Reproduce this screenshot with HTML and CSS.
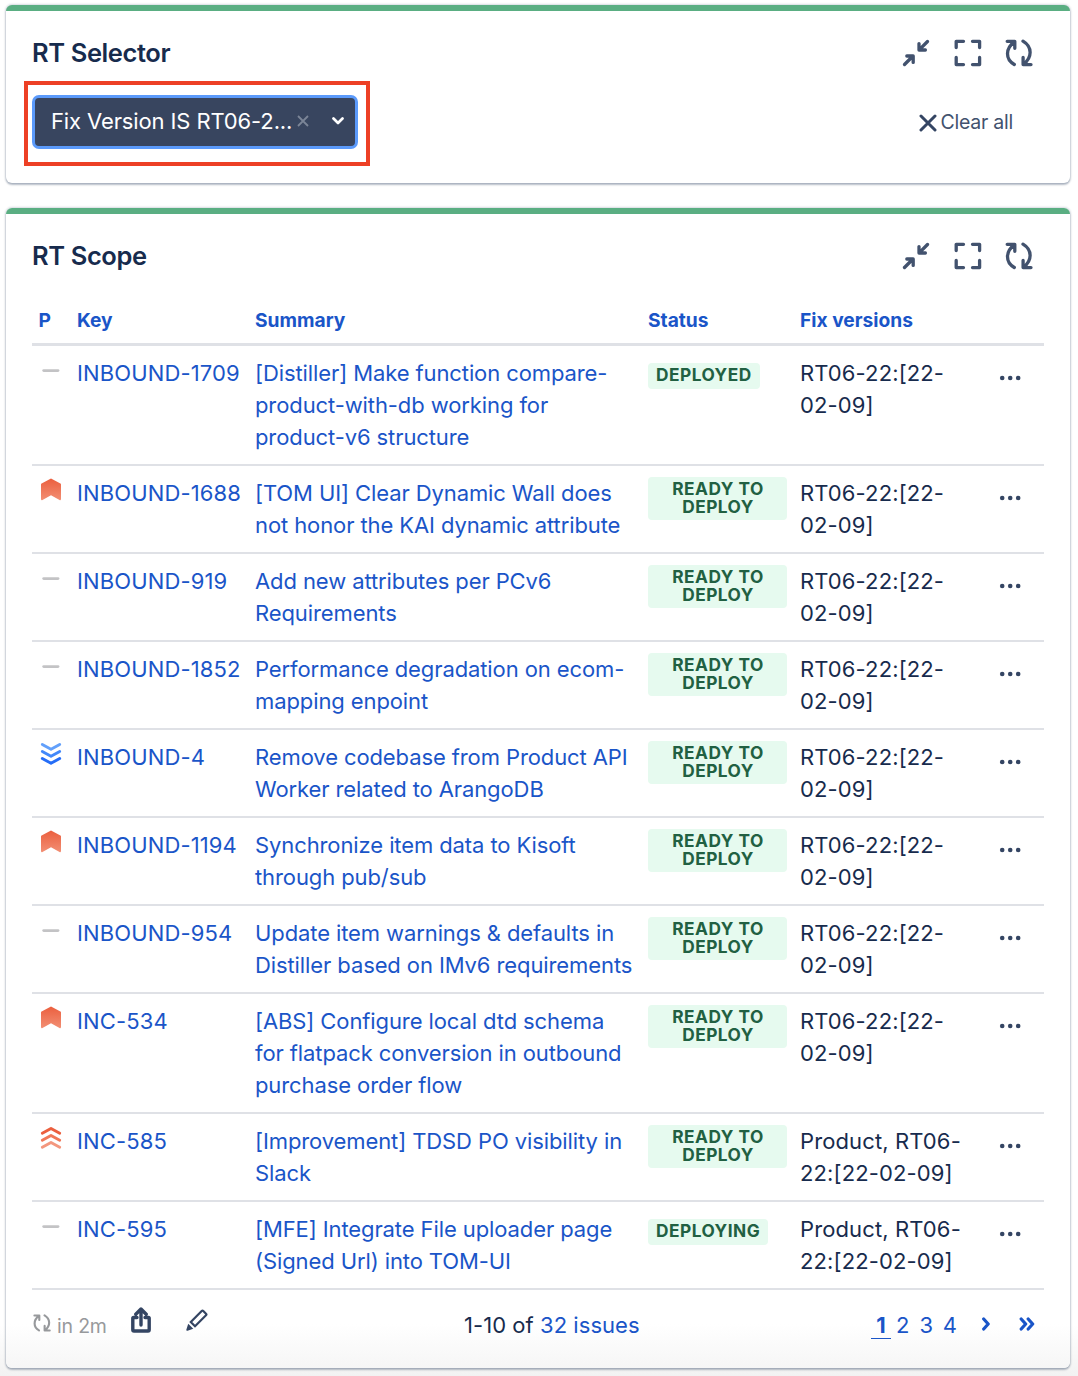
FILE: index.html
```
<!DOCTYPE html>
<html lang="en">
<head>
<meta charset="utf-8">
<title>RT dashboard</title>
<link rel="stylesheet" href="styles.css">
</head>
<body>
<svg class="defs" width="0" height="0" aria-hidden="true">
  <defs>
    <linearGradient id="flame" x1="0" y1="0" x2="0" y2="1"><stop offset="0" stop-color="#eb5f3e"/><stop offset="1" stop-color="#f28f74"/></linearGradient>
    <symbol id="collapse" viewBox="0 0 28 28"><path d="M2.500 25.500L11 17M4.800 17H11.200V23.400M25.500 2.500L17.200 10.800M17 4.600V11H23.400" /></symbol>
    <symbol id="expand" viewBox="0 0 28 28"><path d="M2.200 8.500V2.300H9.500M18.500 2.300H25.600V8.500M2.200 18.500V25.600H9.500M18.500 25.600H25.600V18.500"/></symbol>
    <symbol id="refresh" viewBox="0 0 28 28"><path d="M2.200 2.300H9.800V9.300M9.500 2.600C.2 9.500 .2 20.300 9.300 25.500M18 2.200C27.300 7.800 27.500 18.500 18.500 25.200M18.100 18.500V25.600H26"/></symbol>
    <symbol id="none" viewBox="0 0 22 24"><path d="M3.700 12.600H18" fill="none" stroke="#c3c3c5" stroke-width="2.800" stroke-linecap="round"/></symbol>
    <symbol id="flag" viewBox="0 0 22 24"><path d="M1.600 5.500Q1 5.800 1 6.400V21Q1 22.700 2.500 21.900L11 17.300 19.500 21.900Q21 22.700 21 21V6.400Q21 5.800 20.400 5.500L11 .5Z" fill="url(#flame)"/></symbol>
    <symbol id="highest" viewBox="0 0 22 24"><g fill="none" stroke-width="2.900" stroke-linecap="round" stroke-linejoin="round"><path d="M2.300 7.300L11 2.400 19.700 7.300" stroke="#eb5f3e"/><path d="M2.300 14.300L11 9.400 19.700 14.300" stroke="#f07858"/><path d="M2.300 21.300L11 16.400 19.700 21.300" stroke="#f3977e"/></g></symbol>
    <symbol id="lowest" viewBox="0 0 22 24"><g fill="none" stroke-width="2.900" stroke-linecap="round" stroke-linejoin="round"><path d="M2.300 2.400L11 7.300 19.700 2.400" stroke="#62a0fb"/><path d="M2.300 9.400L11 14.300 19.700 9.400" stroke="#4288fa"/><path d="M2.300 16.400L11 21.300 19.700 16.400" stroke="#256df7"/></g></symbol>
    <symbol id="more" viewBox="0 0 22 6"><circle cx="3.200" cy="3" r="2.300"/><circle cx="11.200" cy="3" r="2.300"/><circle cx="19.200" cy="3" r="2.300"/></symbol>
  </defs>
</svg>

<section class="card selector">
  <header class="card-head">
    <h2>RT Selector</h2>
    <div class="tools"><svg class="tool"><use href="#collapse"/></svg><svg class="tool"><use href="#expand"/></svg><svg class="tool"><use href="#refresh"/></svg></div>
  </header>
  <div class="filters">
    <button class="filter">
      <span>Fix Version IS RT06-2...</span>
      <svg class="remove" viewBox="0 0 12 12"><path d="M1 1L11 11M11 1L1 11"/></svg>
      <svg class="caret" viewBox="0 0 12 8"><path d="M1.500 1.500L6 6 10.500 1.500"/></svg>
    </button>
    <div class="clear"><svg viewBox="0 0 18 18"><path d="M2 2L16 16M16 2L2 16"/></svg><span>Clear all</span></div>
    <div class="highlight"></div>
  </div>
</section>

<section class="card scope">
  <header class="card-head">
    <h2>RT Scope</h2>
    <div class="tools"><svg class="tool"><use href="#collapse"/></svg><svg class="tool"><use href="#expand"/></svg><svg class="tool"><use href="#refresh"/></svg></div>
  </header>
  <div class="issues">
    <div class="row head"><span class="p">P</span><span>Key</span><span>Summary</span><span>Status</span><span>Fix versions</span></div>
    <div class="row"><svg class="prio"><use href="#none"/></svg><a class="key">INBOUND-1709</a><a class="summary">[Distiller] Make function compare-<br>product-with-db working for<br>product-v6 structure</a><div><b class="badge single">DEPLOYED</b></div><span class="fix">RT06-22:[22-<br>02-09]</span><svg class="more"><use href="#more"/></svg></div>
    <div class="row"><svg class="prio"><use href="#flag"/></svg><a class="key">INBOUND-1688</a><a class="summary">[TOM UI] Clear Dynamic Wall does<br>not honor the KAI dynamic attribute</a><div><b class="badge">READY TO<br>DEPLOY</b></div><span class="fix">RT06-22:[22-<br>02-09]</span><svg class="more"><use href="#more"/></svg></div>
    <div class="row"><svg class="prio"><use href="#none"/></svg><a class="key">INBOUND-919</a><a class="summary">Add new attributes per PCv6<br>Requirements</a><div><b class="badge">READY TO<br>DEPLOY</b></div><span class="fix">RT06-22:[22-<br>02-09]</span><svg class="more"><use href="#more"/></svg></div>
    <div class="row"><svg class="prio"><use href="#none"/></svg><a class="key">INBOUND-1852</a><a class="summary">Performance degradation on ecom-<br>mapping enpoint</a><div><b class="badge">READY TO<br>DEPLOY</b></div><span class="fix">RT06-22:[22-<br>02-09]</span><svg class="more"><use href="#more"/></svg></div>
    <div class="row"><svg class="prio"><use href="#lowest"/></svg><a class="key">INBOUND-4</a><a class="summary">Remove codebase from Product API<br>Worker related to ArangoDB</a><div><b class="badge">READY TO<br>DEPLOY</b></div><span class="fix">RT06-22:[22-<br>02-09]</span><svg class="more"><use href="#more"/></svg></div>
    <div class="row"><svg class="prio"><use href="#flag"/></svg><a class="key">INBOUND-1194</a><a class="summary">Synchronize item data to Kisoft<br>through pub/sub</a><div><b class="badge">READY TO<br>DEPLOY</b></div><span class="fix">RT06-22:[22-<br>02-09]</span><svg class="more"><use href="#more"/></svg></div>
    <div class="row"><svg class="prio"><use href="#none"/></svg><a class="key">INBOUND-954</a><a class="summary">Update item warnings &amp; defaults in<br>Distiller based on IMv6 requirements</a><div><b class="badge">READY TO<br>DEPLOY</b></div><span class="fix">RT06-22:[22-<br>02-09]</span><svg class="more"><use href="#more"/></svg></div>
    <div class="row"><svg class="prio"><use href="#flag"/></svg><a class="key">INC-534</a><a class="summary">[ABS] Configure local dtd schema<br>for flatpack conversion in outbound<br>purchase order flow</a><div><b class="badge">READY TO<br>DEPLOY</b></div><span class="fix">RT06-22:[22-<br>02-09]</span><svg class="more"><use href="#more"/></svg></div>
    <div class="row"><svg class="prio"><use href="#highest"/></svg><a class="key">INC-585</a><a class="summary">[Improvement] TDSD PO visibility in<br>Slack</a><div><b class="badge">READY TO<br>DEPLOY</b></div><span class="fix">Product, RT06-<br>22:[22-02-09]</span><svg class="more"><use href="#more"/></svg></div>
    <div class="row"><svg class="prio"><use href="#none"/></svg><a class="key">INC-595</a><a class="summary">[MFE] Integrate File uploader page<br>(Signed Url) into TOM-UI</a><div><b class="badge single">DEPLOYING</b></div><span class="fix">Product, RT06-<br>22:[22-02-09]</span><svg class="more"><use href="#more"/></svg></div>
  </div>
  <footer class="foot">
    <div class="actions">
      <svg class="mini"><use href="#refresh"/></svg><span class="next">in 2m</span>
      <svg class="share" viewBox="0 0 20 26"><path d="M6 10.500H2.600Q1.800 10.500 1.800 11.300V22.800Q1.800 24 3 24H17Q18.200 24 18.200 22.800V11.300Q18.200 10.500 17.400 10.500H14M10 18V2.500M4.800 7.300L10 2 15.200 7.300"/></svg>
      <svg class="pencil" viewBox="0 0 22 22"><path d="M4.800 13L15.700 2Q16.500 1.200 17.300 2L20 4.700Q20.800 5.500 20 6.300L9 17.200Z" fill="none" stroke="#344563" stroke-width="2.200"/><path d="M2.200 14.700L7.300 19.800 1.500 21.700Q0 22 .4 20.500Z" fill="#344563"/></svg>
    </div>
    <div class="count">1-10 of <a>32 issues</a></div>
    <nav class="pages"><a class="current">1</a><a>2</a><a>3</a><a>4</a>
      <svg class="fwd" viewBox="0 0 8 14"><path d="M1.700 2L6.200 7 1.700 12"/></svg>
      <svg class="last" viewBox="0 0 16 14"><path d="M2.200 2L6.700 7 2.200 12M9.200 2L13.700 7 9.200 12"/></svg>
    </nav>
  </footer>
</section>
</body>
</html>
```
FILE: styles.css
```
* { box-sizing: border-box; }
body {
  margin: 0;
  height: 1376px;
  overflow: hidden;
  padding: 5px 8px 0 6px;
  display: flex;
  flex-direction: column;
  gap: 25px;
  font-family: Inter, "Liberation Sans", sans-serif;
  font-size: 22px;
  line-height: 32px;
  color: #172b4d;
  background: linear-gradient(#fff 1325px, #f2f2f2 1376px);
}
.defs { position: absolute; }
.card {
  background: #fff;
  border-top: 6px solid #5aae82;
  border-radius: 6px;
  box-shadow: 0 0 2px 1px rgba(9, 30, 66, .16), 0 2px 2px rgba(9, 30, 66, .25);
  padding: 0 26px;
}
.selector { height: 178px; }
.scope { height: 1160px; background: linear-gradient(#fff 1110px, #f6f6f6 1154px); }
.card-head {
  height: 84px;
  padding-right: 11px;
  display: flex;
  align-items: center;
  justify-content: space-between;
}
h2 { margin: 0; font-size: 25.5px; font-weight: 600; letter-spacing: -.4px; }
.tools { display: flex; gap: 23.500px; }
.tool { width: 28px; height: 28px; }
.tool, .mini { fill: none; stroke: #42526e; stroke-width: 3.300; stroke-linecap: round; stroke-linejoin: round; }
.filters { position: relative; display: flex; justify-content: space-between; align-items: center; padding-right: 31px; }
.filter {
  width: 326px; height: 54px;
  display: flex; align-items: center;
  padding: 0 11px 2px 16px;
  border: 3px solid #5b9afb;
  border-radius: 7px;
  background: #38455f;
  color: #fff;
  font: inherit;
}
.filter span { width: 242px; text-align: left; white-space: nowrap; letter-spacing: -.12px; }
.remove { width: 12px; height: 12px; margin-left: 4px; fill: none; stroke: #7b8597; stroke-width: 1.800; }
.caret { width: 12px; height: 8px; margin-left: 23px; fill: none; stroke: #fff; stroke-width: 2.700; stroke-linecap: round; stroke-linejoin: round; }
.clear { display: flex; align-items: center; gap: 4px; font-size: 19.500px; letter-spacing: -.25px; color: #42526e; }
.clear svg { width: 18px; height: 18px; margin-top: 2px; fill: none; stroke: #344563; stroke-width: 3; stroke-linecap: round; }
.highlight { position: absolute; left: -8px; top: -14px; width: 346px; height: 85px; border: 4px solid #ed4025; }
.row {
  display: grid;
  grid-template-columns: 45px 178px 393px 152px 199px 1fr;
  align-items: start;
  padding: 11px 0;
  border-bottom: 2px solid #dfe1e6;
  white-space: nowrap;
}
.row.head { padding: 6px 0 7px; height: 48px; border-bottom-width: 3px; font-size: 19.200px; font-weight: 650; line-height: 32px; color: #1a55c8; }
.head .p { padding-left: 6.500px; }
a { color: #1a55c8; }
.key { letter-spacing: .13px; }
.summary { letter-spacing: -.1px; }
.fix { letter-spacing: .12px; }
.prio { width: 22px; height: 24px; margin: 1px 0 0 8px; }
.badge {
  display: block;
  width: 139px; height: 43px;
  padding: 3px 0 0 1px;
  border-radius: 4px;
  background: #e6faef;
  color: #216042;
  font-size: 17.300px;
  font-weight: 700;
  line-height: 18px;
  letter-spacing: .5px;
  text-align: center;
}
.badge.single { width: max-content; height: 26px; margin-top: 6px; padding: 3px 8px 0; }
.more { width: 22px; height: 6px; margin: 18px 0 0; fill: #344563; }
.foot { display: grid; grid-template-columns: 432px 1fr auto; padding-top: 19px; }
.actions { display: flex; align-items: flex-start; }
.mini { flex: none; width: 18px; height: 18px; margin-top: 5px; margin-left: 1px; stroke: #97999c; }
.next { flex: none; margin: 1px 0 0 6px; width: 50px; color: #97999c; font-size: 19.500px; white-space: nowrap; letter-spacing: -.2px; }
.share { width: 20px; height: 26px; margin: -2px 0 0 23.500px; fill: none; stroke: #344563; stroke-width: 3.400; stroke-linecap: round; stroke-linejoin: round; }
.pencil { width: 22px; height: 22px; margin: 0 0 0 35px; }
.count { letter-spacing: .05px; }
.pages { display: flex; padding-right: 9px; }
.pages a { width: 23.500px; text-align: center; }
.pages .current { width: 20px; height: 30px; font-weight: 700; border-bottom: 1px solid #1a55c8; }
.pages svg { height: 14px; margin-top: 8px; fill: none; stroke: #1a55c8; stroke-width: 3.200; stroke-linecap: round; stroke-linejoin: round; }
.fwd { width: 8px; margin-left: 20px; }
.last { width: 16px; margin-left: 29.500px; }
```
